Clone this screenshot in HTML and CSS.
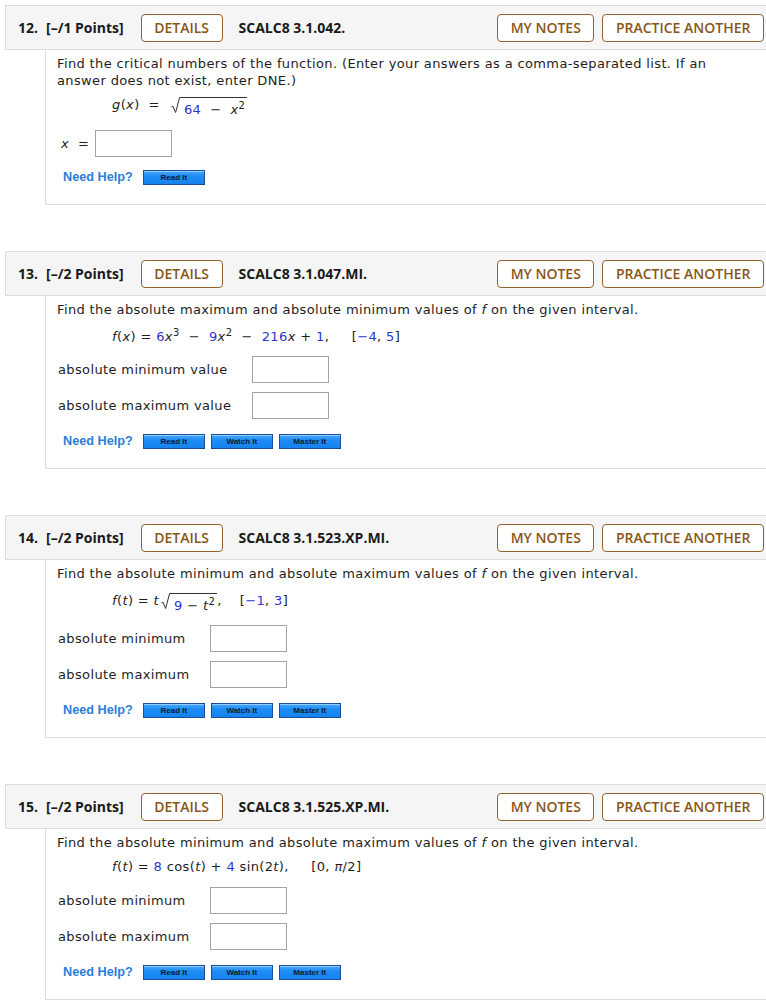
FILE: index.html
```html
<!DOCTYPE html>
<html>
<head>
<meta charset="utf-8">
<link rel="stylesheet" href="styles.css">
</head>
<body>

<div class="q">
  <div class="qhead">
    <span class="qnum">12.</span><span class="pts">[–/1 Points]</span>
    <span class="btn">DETAILS</span>
    <span class="code">SCALC8 3.1.042.</span>
    <span class="btn push">MY NOTES</span>
    <span class="btn">PRACTICE ANOTHER</span>
  </div>
  <div class="qbody b12">
    <p class="prompt">Find the critical numbers of the function. (Enter your answers as a comma-separated list. If an<br>answer does not exist, enter DNE.)</p>
    <div class="formula"><i>g</i>(<i>x</i>) &nbsp;=&nbsp; <span class="sqrt"><svg class="rad" width="10" height="20" viewBox="0 0 10 20"><path d="M0.5 11 L2 10.2 L4.6 16.5 L8.6 1.5 L10 1.5" fill="none" stroke="#333" stroke-width="1"/></svg><span class="radicand"><span class="n">64</span> &nbsp;−&nbsp; <i>x</i><sup>2</sup></span></span></div>
    <div class="answers ax">
      <label class="lbl lx"><i>x</i> &nbsp;=</label><span class="inp"></span>
    </div>
    <div class="help"><span class="need">Need Help?</span><span class="hbtn">Read It</span></div>
  </div>
</div>

<div class="q">
  <div class="qhead">
    <span class="qnum">13.</span><span class="pts">[–/2 Points]</span>
    <span class="btn">DETAILS</span>
    <span class="code">SCALC8 3.1.047.MI.</span>
    <span class="btn push">MY NOTES</span>
    <span class="btn">PRACTICE ANOTHER</span>
  </div>
  <div class="qbody b13">
    <p class="prompt">Find the absolute maximum and absolute minimum values of <i>f</i> on the given interval.</p>
    <div class="formula"><i>f</i>(<i>x</i>) = <span class="n">6</span><i>x</i><sup>3</sup> &nbsp;−&nbsp; <span class="n">9</span><i>x</i><sup>2</sup> &nbsp;−&nbsp; <span class="n">216</span><i>x</i> + <span class="n">1</span>, &nbsp;&nbsp;&nbsp; [<span class="n">−4</span>, <span class="n">5</span>]</div>
    <div class="answers">
      <label class="lbl">absolute minimum value</label><span class="inp"></span>
      <label class="lbl">absolute maximum value</label><span class="inp"></span>
    </div>
    <div class="help"><span class="need">Need Help?</span><span class="hbtn">Read It</span><span class="hbtn">Watch It</span><span class="hbtn">Master It</span></div>
  </div>
</div>

<div class="q">
  <div class="qhead">
    <span class="qnum">14.</span><span class="pts">[–/2 Points]</span>
    <span class="btn">DETAILS</span>
    <span class="code">SCALC8 3.1.523.XP.MI.</span>
    <span class="btn push">MY NOTES</span>
    <span class="btn">PRACTICE ANOTHER</span>
  </div>
  <div class="qbody b14">
    <p class="prompt">Find the absolute minimum and absolute maximum values of <i>f</i> on the given interval.</p>
    <div class="formula"><i>f</i>(<i>t</i>) = <i>t</i><span class="sqrt"><svg class="rad" width="10" height="20" viewBox="0 0 10 20"><path d="M0.5 11 L2 10.2 L4.6 16.5 L8.6 1.5 L10 1.5" fill="none" stroke="#333" stroke-width="1"/></svg><span class="radicand"><span class="n">9</span> − <i>t</i><sup>2</sup></span></span>, &nbsp;&nbsp; [<span class="n">−1</span>, <span class="n">3</span>]</div>
    <div class="answers">
      <label class="lbl">absolute minimum</label><span class="inp"></span>
      <label class="lbl">absolute maximum</label><span class="inp"></span>
    </div>
    <div class="help"><span class="need">Need Help?</span><span class="hbtn">Read It</span><span class="hbtn">Watch It</span><span class="hbtn">Master It</span></div>
  </div>
</div>

<div class="q">
  <div class="qhead">
    <span class="qnum">15.</span><span class="pts">[–/2 Points]</span>
    <span class="btn">DETAILS</span>
    <span class="code">SCALC8 3.1.525.XP.MI.</span>
    <span class="btn push">MY NOTES</span>
    <span class="btn">PRACTICE ANOTHER</span>
  </div>
  <div class="qbody b15">
    <p class="prompt">Find the absolute minimum and absolute maximum values of <i>f</i> on the given interval.</p>
    <div class="formula"><i>f</i>(<i>t</i>) = <span class="n">8</span> cos(<i>t</i>) + <span class="n">4</span> sin(2<i>t</i>), &nbsp;&nbsp;&nbsp; [0, <i>π</i>/2]</div>
    <div class="answers">
      <label class="lbl">absolute minimum</label><span class="inp"></span>
      <label class="lbl">absolute maximum</label><span class="inp"></span>
    </div>
    <div class="help"><span class="need">Need Help?</span><span class="hbtn">Read It</span><span class="hbtn">Watch It</span><span class="hbtn">Master It</span></div>
  </div>
</div>

</body>
</html>
```

FILE: styles.css
```css
html, body {
  margin: 0;
  padding: 0;
  background: #ffffff;
}
body {
  padding-top: 5px;
  padding-left: 5px;
  font-family: "DejaVu Sans", Verdana, sans-serif;
  color: #1e1e1e;
}
.q {
  margin-bottom: 46px;
}
.qhead {
  display: flex;
  align-items: center;
  height: 45px;
  box-sizing: border-box;
  border: 1px solid #dcdcdc;
  border-right: none;
  background: #f5f5f5;
  padding-left: 12px;
  padding-right: 2px;
  font-family: "Open Sans", sans-serif;
  font-size: 14px;
  font-weight: 700;
  color: #1a1a1a;
  gap: 16px;
}
.qnum {
  margin-right: -8px;
}
.btn {
  display: inline-flex;
  align-items: center;
  height: 28px;
  box-sizing: border-box;
  padding: 0 12.5px;
  border: 1px solid #94622c;
  border-radius: 4px;
  background: #ffffff;
  color: #8a5519;
  font-weight: 600;
  font-size: 14px;
}
.pts {
  margin-right: 1px;
}
.code {
  font-weight: 700;
}
.push {
  margin-left: auto;
}
.btn.push + .btn {
  margin-left: -8px;
}
.qbody {
  margin-left: 40px;
  border-left: 1px solid #dcdcdc;
  border-bottom: 1px solid #dcdcdc;
  padding: 5px 0 19px 11px;
  font-size: 13px;
  letter-spacing: 0.37px;
}
.prompt {
  margin: 0;
  line-height: 17px;
}
.formula {
  margin-top: 8px;
  padding-left: 55px;
  line-height: 22px;
  height: 22px;
  white-space: nowrap;
}
.formula sup {
  font-size: 10px;
  line-height: 0;
}
.n {
  color: #2b34d4;
}
.sqrt {
  display: inline-flex;
  align-items: flex-start;
  vertical-align: top;
  height: 22px;
  margin-left: 2px;
}
.rad {
  display: block;
  margin-top: 2px;
}
.radicand {
  display: inline-block;
  border-top: 1px solid #333;
  margin-top: 3px;
  line-height: 19px;
  padding: 2px 2px 0 3px;
}
.answers {
  display: grid;
  grid-template-columns: max-content 77px;
  column-gap: 21px;
  row-gap: 9px;
  align-items: center;
  margin-top: 8px;
}
.answers.ax {
  column-gap: 6px;
}
.lbl {
  padding-left: 1px;
}
.lx {
  padding-left: 4px;
}
.inp {
  display: block;
  width: 77px;
  height: 27px;
  box-sizing: border-box;
  border: 1px solid #a3a3a3;
  background: #fff;
}
.help {
  display: flex;
  align-items: center;
  gap: 6px;
  margin-top: 14px;
  padding-left: 6px;
  height: 16px;
  letter-spacing: 0;
}

/* per-question vertical rhythm */
.b12 {
  padding-bottom: 19px;
}
.b12 .formula {
  margin-top: 5px;
}
.b12 .answers {
  margin-top: 14px;
}
.b12 .help {
  margin-top: 12px;
}
.b14 .answers {
  margin-top: 13px;
}
.b15 .formula {
  margin-top: 5px;
}
.b15 .answers {
  margin-top: 9px;
}

.need {
  font-family: "Liberation Sans", Arial, sans-serif;
  font-weight: 700;
  font-size: 12.7px;
  color: #2a7fd9;
  margin-right: 4px;
}
.hbtn {
  display: inline-flex;
  align-items: center;
  justify-content: center;
  width: 62px;
  height: 15px;
  box-sizing: border-box;
  border: 1px solid #1b4f9c;
  background: linear-gradient(#49a9ff, #1e8cf5 40%, #1583ee);
  box-shadow: inset 0 1px 0 #8fcbff;
  font-family: "Liberation Sans", Arial, sans-serif;
  font-weight: 700;
  font-size: 8px;
  color: #0a1a33;
}
```
